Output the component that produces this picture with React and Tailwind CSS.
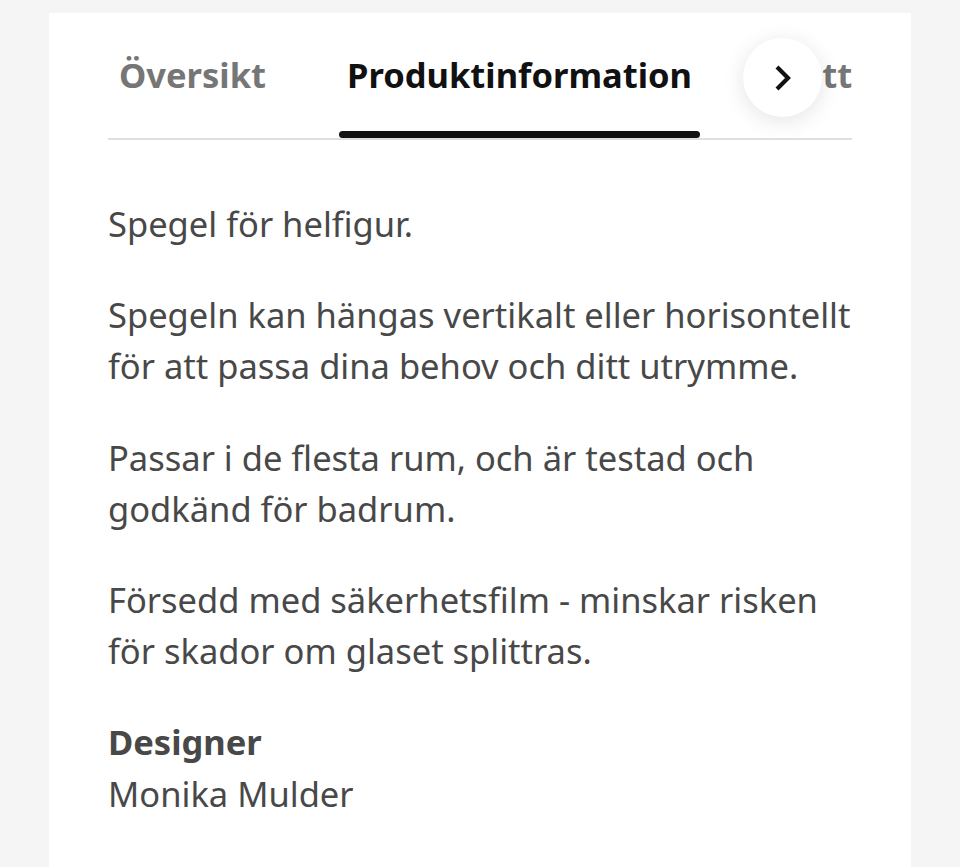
import React from "react";

export default function App() {
  return (
    <div
      className="min-h-screen bg-[#f5f5f5] pt-[13px]"
      style={{ fontFamily: '"Noto Sans", "Open Sans", sans-serif' }}
    >
      <div className="mx-auto w-[862px] min-h-[854px] bg-white px-[59px] pt-[36px]">
        <div className="relative">
          <div className="overflow-hidden border-b-2 border-[#dfdfdf]">
            <div className="flex gap-[65px] pl-[3px] whitespace-nowrap text-[34.5px] leading-[51.2px] font-bold">
              <div className="px-2 pb-[37.8px] text-[#767676]">Översikt</div>
              <div className="relative px-2 pb-[37.8px] text-[#111111]">
                Produktinformation
                <div className="absolute left-0 right-0 bottom-0 h-[7px] rounded-full bg-[#111111]"></div>
              </div>
              <div className="ml-[-4px] px-2 pb-[37.8px] text-[#767676]">Mått</div>
            </div>
          </div>
          <button className="absolute left-[635px] top-[-11px] flex h-[79px] w-[79px] items-center justify-center rounded-full bg-white shadow-[0_4px_22px_rgba(0,0,0,0.11)]">
            <svg width="17" height="28" viewBox="0 0 17 28" fill="none">
              <path d="M3 3 L14 14 L3 25" stroke="#111111" strokeWidth="4.2" strokeLinecap="butt" strokeLinejoin="miter" />
            </svg>
          </button>
        </div>

        <div className="pt-[58px] text-[34.5px] leading-[51.2px] text-[#484848]">
          <p className="mb-[40px]">Spegel för helfigur.</p>
          <p className="mb-[40px]">
            Spegeln kan hängas vertikalt eller horisontellt för att passa dina behov och ditt utrymme.
          </p>
          <p className="mb-[40px]">
            Passar i de flesta rum, och är testad och godkänd för badrum.
          </p>
          <p className="mb-[40px]">
            Försedd med säkerhetsfilm - minskar risken för skador om glaset splittras.
          </p>
          <p className="font-bold">Designer</p>
          <p>Monika Mulder</p>
        </div>
      </div>
    </div>
  );
}
